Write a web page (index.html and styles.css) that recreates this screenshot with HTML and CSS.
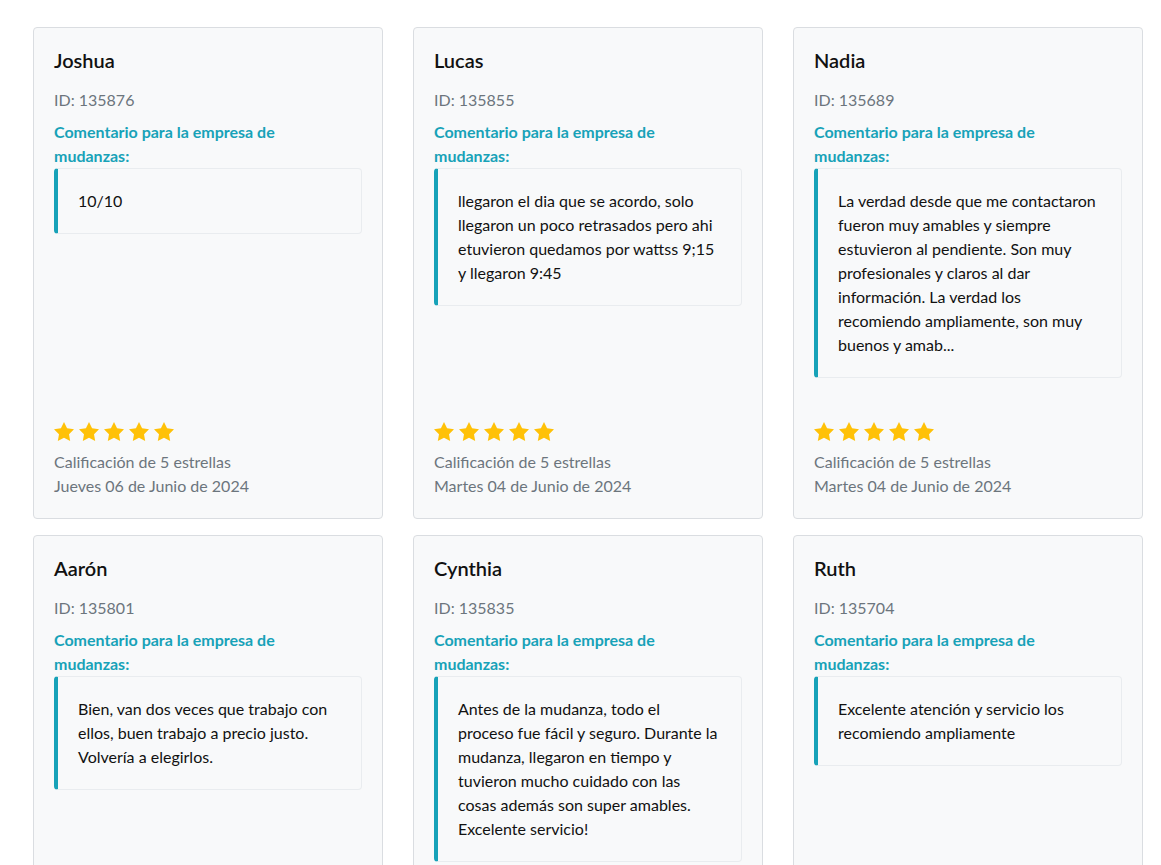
FILE: index.html
```html
<!DOCTYPE html>
<html lang="es">

<head>
  <meta charset="UTF-8">
  <title>Opiniones de clientes</title>
  <link rel="stylesheet" href="styles.css">
</head>

<body>
  <svg class="sprite" xmlns="http://www.w3.org/2000/svg">
    <symbol id="star" viewBox="2 2 20 20">
      <polygon points="12,2 15.09,8.26 22,9.27 17,14.14 18.18,21.02 12,17.77 5.82,21.02 7,14.14 2,9.27 8.91,8.26" />
    </symbol>
  </svg>

  <div class="reviews">

    <div class="review-card">
      <h5 class="review-name">Joshua</h5>
      <p class="review-id">ID: 135876</p>
      <p class="review-label">Comentario para la empresa de mudanzas:</p>
      <blockquote class="review-text">10/10</blockquote>
      <div class="review-footer">
        <div class="stars">
          <svg><use href="#star" /></svg><svg><use href="#star" /></svg><svg><use href="#star" /></svg><svg><use href="#star" /></svg><svg><use href="#star" /></svg>
        </div>
        <p class="review-meta">Calificación de 5 estrellas</p>
        <p class="review-meta">Jueves 06 de Junio de 2024</p>
      </div>
    </div>

    <div class="review-card">
      <h5 class="review-name">Lucas</h5>
      <p class="review-id">ID: 135855</p>
      <p class="review-label">Comentario para la empresa de mudanzas:</p>
      <blockquote class="review-text">llegaron el dia que se acordo, solo llegaron un poco retrasados pero ahi etuvieron quedamos por wattss 9;15 y llegaron 9:45</blockquote>
      <div class="review-footer">
        <div class="stars">
          <svg><use href="#star" /></svg><svg><use href="#star" /></svg><svg><use href="#star" /></svg><svg><use href="#star" /></svg><svg><use href="#star" /></svg>
        </div>
        <p class="review-meta">Calificación de 5 estrellas</p>
        <p class="review-meta">Martes 04 de Junio de 2024</p>
      </div>
    </div>

    <div class="review-card">
      <h5 class="review-name">Nadia</h5>
      <p class="review-id">ID: 135689</p>
      <p class="review-label">Comentario para la empresa de mudanzas:</p>
      <blockquote class="review-text">La verdad desde que me contactaron fueron muy amables y siempre estuvieron al pendiente. Son muy profesionales y claros al dar información. La verdad los recomiendo ampliamente, son muy buenos y amab...</blockquote>
      <div class="review-footer">
        <div class="stars">
          <svg><use href="#star" /></svg><svg><use href="#star" /></svg><svg><use href="#star" /></svg><svg><use href="#star" /></svg><svg><use href="#star" /></svg>
        </div>
        <p class="review-meta">Calificación de 5 estrellas</p>
        <p class="review-meta">Martes 04 de Junio de 2024</p>
      </div>
    </div>

    <div class="review-card">
      <h5 class="review-name">Aarón</h5>
      <p class="review-id">ID: 135801</p>
      <p class="review-label">Comentario para la empresa de mudanzas:</p>
      <blockquote class="review-text">Bien, van dos veces que trabajo con ellos, buen trabajo a precio justo. Volvería a elegirlos.</blockquote>
      <div class="review-footer">
        <div class="stars">
          <svg><use href="#star" /></svg><svg><use href="#star" /></svg><svg><use href="#star" /></svg><svg><use href="#star" /></svg><svg><use href="#star" /></svg>
        </div>
        <p class="review-meta">Calificación de 5 estrellas</p>
        <p class="review-meta">Lunes 03 de Junio de 2024</p>
      </div>
    </div>

    <div class="review-card">
      <h5 class="review-name">Cynthia</h5>
      <p class="review-id">ID: 135835</p>
      <p class="review-label">Comentario para la empresa de mudanzas:</p>
      <blockquote class="review-text">Antes de la mudanza, todo el proceso fue fácil y seguro. Durante la mudanza, llegaron en tiempo y tuvieron mucho cuidado con las cosas además son super amables. Excelente servicio!</blockquote>
      <div class="review-footer">
        <div class="stars">
          <svg><use href="#star" /></svg><svg><use href="#star" /></svg><svg><use href="#star" /></svg><svg><use href="#star" /></svg><svg><use href="#star" /></svg>
        </div>
        <p class="review-meta">Calificación de 5 estrellas</p>
        <p class="review-meta">Lunes 03 de Junio de 2024</p>
      </div>
    </div>

    <div class="review-card">
      <h5 class="review-name">Ruth</h5>
      <p class="review-id">ID: 135704</p>
      <p class="review-label">Comentario para la empresa de mudanzas:</p>
      <blockquote class="review-text">Excelente atención y servicio los recomiendo ampliamente</blockquote>
      <div class="review-footer">
        <div class="stars">
          <svg><use href="#star" /></svg><svg><use href="#star" /></svg><svg><use href="#star" /></svg><svg><use href="#star" /></svg><svg><use href="#star" /></svg>
        </div>
        <p class="review-meta">Calificación de 5 estrellas</p>
        <p class="review-meta">Viernes 31 de Mayo de 2024</p>
      </div>
    </div>

  </div>
</body>

</html>
```

FILE: styles.css
```css
body {
  margin: 0;
  font-family: "Segoe UI", Lato, "Liberation Sans", sans-serif;
  font-size: 16px;
  line-height: 1.5;
  color: #212529;
  background: #ffffff;
}

.sprite {
  display: none;
}

.reviews {
  display: grid;
  grid-template-columns: repeat(3, 350px);
  column-gap: 30px;
  row-gap: 16px;
  padding: 27px 0 0 33px;
}

.review-card {
  display: flex;
  flex-direction: column;
  padding: 20px;
  border: 1px solid #dadde1;
  border-radius: 4px;
  background: #f8f9fa;
}

.review-name {
  margin: 0 0 16px;
  font-size: 20px;
  font-weight: 600;
  line-height: 1.2;
  color: #111111;
}

.review-id {
  margin: 0 0 8px;
  color: #6c757d;
}

.review-label {
  margin: 0;
  padding-right: 24px;
  font-weight: 700;
  color: #17a2b8;
}

.review-text {
  margin: 0 0 16px;
  padding: 20px 23px 20px 20px;
  border: 1px solid #e9ecef;
  border-left: 4px solid #17a2b8;
  border-radius: 4px;
  background: #f8f9fa;
  color: #111111;
}

.review-footer {
  margin-top: auto;
  padding-top: 28px;
}

.stars {
  display: flex;
  gap: 5px;
  margin-bottom: 8px;
}

.stars svg {
  width: 20px;
  height: 20px;
  fill: #ffc107;
}

.review-meta {
  margin: 0;
  color: #6c757d;
}
```
